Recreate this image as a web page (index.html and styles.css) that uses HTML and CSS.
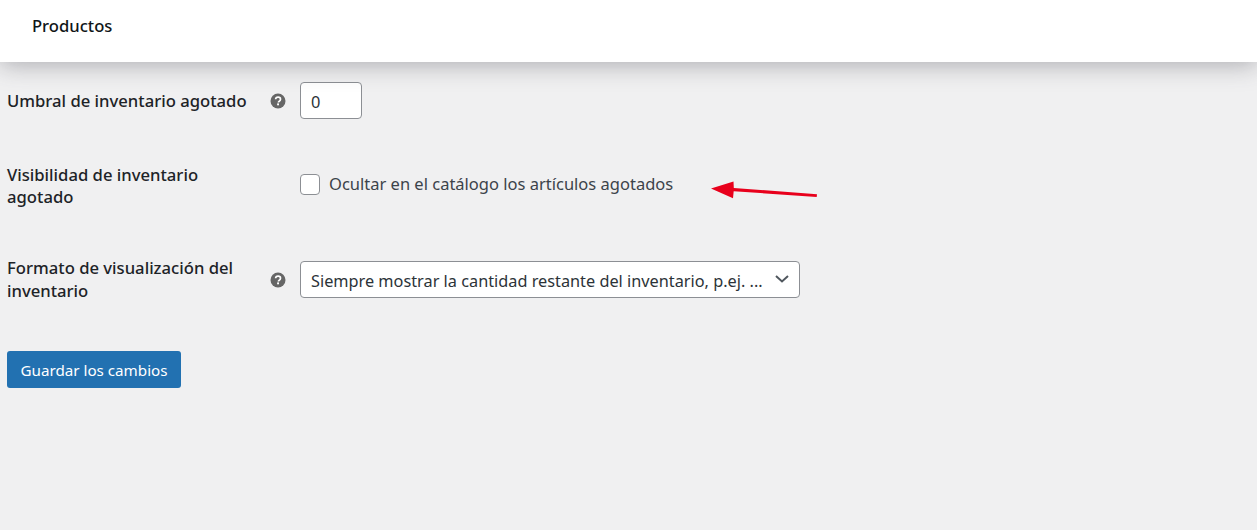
FILE: index.html
```html
<!DOCTYPE html>
<html lang="es">
<head>
<meta charset="utf-8">
<title>Productos</title>
<link rel="stylesheet" href="styles.css">
</head>
<body>
<header class="topbar"><h1 class="title">Productos</h1></header>
<main class="settings">
  <div class="row row-threshold">
    <label class="label">Umbral de inventario agotado</label>
    <span class="help"><svg viewBox="0 0 16 16" width="16" height="16"><circle cx="8" cy="8" r="7.5" fill="#666"/><path d="M5.6 6.3c.1-1.4 1.1-2.1 2.5-2.1s2.4.8 2.4 2c0 1-.6 1.5-1.3 2-.6.4-.8.7-.8 1.3" fill="none" stroke="#fff" stroke-width="1.7"/><rect x="7.1" y="10.4" width="1.9" height="1.9" fill="#fff"/></svg></span>
    <div class="control"><div class="input">0</div></div>
  </div>
  <div class="row row-visibility">
    <label class="label">Visibilidad de inventario agotado</label>
    <span class="help"></span>
    <div class="control check-line"><span class="checkbox"></span><span class="check-text">Ocultar en el catálogo los artículos agotados</span></div>
  </div>
  <div class="row row-format">
    <label class="label">Formato de visualización del inventario</label>
    <span class="help"><svg viewBox="0 0 16 16" width="16" height="16"><circle cx="8" cy="8" r="7.5" fill="#666"/><path d="M5.6 6.3c.1-1.4 1.1-2.1 2.5-2.1s2.4.8 2.4 2c0 1-.6 1.5-1.3 2-.6.4-.8.7-.8 1.3" fill="none" stroke="#fff" stroke-width="1.7"/><rect x="7.1" y="10.4" width="1.9" height="1.9" fill="#fff"/></svg></span>
    <div class="control"><div class="select"><span class="select-text">Siempre mostrar la cantidad restante del inventario, p.ej. ...</span><svg class="chevron" viewBox="0 0 14 8" width="14" height="8"><path d="M1 1l6 5.5L13 1" fill="none" stroke="#50575e" stroke-width="2"/></svg></div></div>
  </div>
  <button class="save" type="button">Guardar los cambios</button>
</main>
<svg class="arrow" viewBox="0 0 110 20" width="110" height="20"><path d="M1 7.500L23.500 .5l.3 6.500L107 13.200l-.3 2.700L23.700 10.200l-.7 7z" fill="#e8001c"/></svg>
</body>
</html>
```
FILE: styles.css
```css
* { box-sizing: border-box; }
html, body { margin: 0; height: 100%; }
body {
  background: #f0f0f1;
  color: #1d2327;
  font-family: "Noto Sans", "Open Sans", sans-serif;
  overflow: hidden;
  position: relative;
}
.topbar {
  height: 62px;
  background: #fff;
  padding: 14px 32px 0;
  box-shadow: 0 3px 24px rgba(70, 70, 80, .4);
  position: relative;
}
.title { margin: 0; font-size: 16.6px; line-height: 23px; font-weight: 500; color: #101517; }
.settings { padding: 20px 7px 0; }
.row { display: grid; grid-template-columns: 263px 30px 1fr; align-items: center; }
.label { font-size: 16.65px; line-height: 23px; font-weight: 500; color: #1d2327; padding-right: 14px; }
.help { display: flex; align-items: center; height: 16px; margin-top: 1px; }
.row-format .help { margin-top: 2px; }
.control { display: flex; align-items: center; }
.input {
  width: 62px; height: 37px; border: 1px solid #8c8f94; border-radius: 4px; background: #fff;
  padding: 0 10px; font-size: 16.4px; line-height: 37px; color: #2c3338;
}
.row-threshold { height: 37px; }
.row-visibility { margin-top: 43px; height: 46px; }
.row-visibility .label { line-height: 22px; padding-top: 1px; }
.row-format { margin-top: 48px; height: 46px; }
.check-line { gap: 9px; margin-top: -1px; }
.checkbox { width: 20px; height: 21px; border: 1px solid #8c8f94; border-radius: 4px; background: #fff; }
.check-text { font-size: 16.5px; line-height: 23px; color: #3c434a; margin-bottom: 3px; }
.select {
  width: 500px; height: 37px; border: 1px solid #8c8f94; border-radius: 4px; background: #fff;
  display: flex; align-items: center; justify-content: space-between; padding: 0 10px;
}
.select-text { font-size: 16.3px; color: #2c3338; white-space: nowrap; padding-top: 3px; }
.save {
  display: block; margin-top: 49px; width: 174px; height: 37px; border: 0; border-radius: 3px;
  background: #2271b1; color: #fff; font: 400 15.2px "Noto Sans", "Open Sans", sans-serif; padding: 0;
}
.arrow { position: absolute; left: 710px; top: 181px; }
```
